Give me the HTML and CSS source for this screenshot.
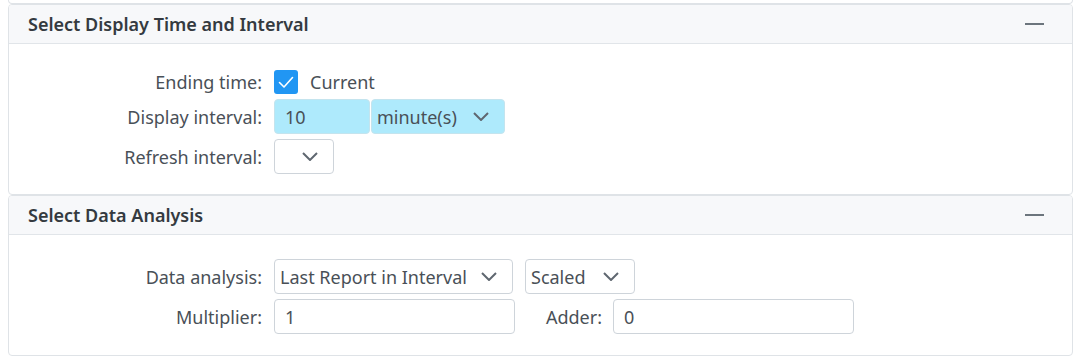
FILE: index.html
```html
<!DOCTYPE html>
<html lang="en">
<head>
    <meta charset="UTF-8">
    <title>Display settings</title>
    <link rel="stylesheet" href="styles.css">
</head>
<body>
    <div class="pagina">
        <div class="tarjeta-previa"></div>

        <div class="tarjeta">
            <div class="cabecera">
                <span class="titulo">Select Display Time and Interval</span>
                <span class="plegar"></span>
            </div>
            <div class="cuerpo cuerpo-tiempo">
                <div class="fila fila-check">
                    <label class="etiqueta">Ending time:</label>
                    <span class="check">
                        <svg width="24" height="24" viewBox="0 0 24 24">
                            <rect x="0" y="0" width="24" height="24" rx="3" fill="#2196f3"/>
                            <path d="M5.5 12.5 L10 17 L18.5 7.5" fill="none" stroke="#fff" stroke-width="1.6" stroke-linecap="round" stroke-linejoin="round"/>
                        </svg>
                    </span>
                    <span class="check-texto">Current</span>
                </div>
                <div class="fila">
                    <label class="etiqueta">Display interval:</label>
                    <div class="campo campo-activo ancho-intervalo">10</div>
                    <div class="selector campo-activo ancho-unidad">
                        <span>minute(s)</span>
                        <svg class="flecha" width="16" height="9" viewBox="0 0 16 9"><path d="M1 1 L8 8 L15 1" fill="none" stroke="#5f6770" stroke-width="2"/></svg>
                    </div>
                </div>
                <div class="fila">
                    <label class="etiqueta">Refresh interval:</label>
                    <div class="selector ancho-refresco">
                        <span></span>
                        <svg class="flecha" width="16" height="9" viewBox="0 0 16 9"><path d="M1 1 L8 8 L15 1" fill="none" stroke="#5f6770" stroke-width="2"/></svg>
                    </div>
                </div>
            </div>
        </div>

        <div class="tarjeta">
            <div class="cabecera">
                <span class="titulo">Select Data Analysis</span>
                <span class="plegar"></span>
            </div>
            <div class="cuerpo cuerpo-analisis">
                <div class="fila">
                    <label class="etiqueta">Data analysis:</label>
                    <div class="selector ancho-analisis">
                        <span>Last Report in Interval</span>
                        <svg class="flecha" width="16" height="9" viewBox="0 0 16 9"><path d="M1 1 L8 8 L15 1" fill="none" stroke="#5f6770" stroke-width="2"/></svg>
                    </div>
                    <div class="selector ancho-escala separado">
                        <span>Scaled</span>
                        <svg class="flecha" width="16" height="9" viewBox="0 0 16 9"><path d="M1 1 L8 8 L15 1" fill="none" stroke="#5f6770" stroke-width="2"/></svg>
                    </div>
                </div>
                <div class="fila">
                    <label class="etiqueta">Multiplier:</label>
                    <div class="campo ancho-numero">1</div>
                    <label class="etiqueta-sumador">Adder:</label>
                    <div class="campo ancho-numero">0</div>
                </div>
            </div>
        </div>
    </div>
</body>
</html>
```

FILE: styles.css
```css
body {
    margin: 0;
    background-color: #fff;
    font-family: "Noto Sans", "Open Sans", sans-serif;
    font-size: 18px;
    color: #495057;
}

.pagina {
    padding: 0 5px 0 8px;
}

.tarjeta-previa {
    height: 3px;
    border: 1px solid #dfe3e7;
    border-top: none;
    border-radius: 0 0 4px 4px;
}

.tarjeta {
    border: 1px solid #dfe3e7;
    border-radius: 4px;
    overflow: hidden;
}

.cabecera {
    display: flex;
    justify-content: space-between;
    align-items: center;
    height: 38px;
    padding: 0 28px 0 19px;
    background-color: #f7f8fa;
    border-bottom: 1px solid #e1e5e9;
}

.titulo {
    font-weight: 600;
    color: #343a40;
}

.plegar {
    width: 19px;
    height: 2px;
    background-color: #6c757d;
}

.cuerpo {
    display: flex;
    flex-direction: column;
    gap: 5px;
}

.cuerpo-tiempo {
    padding: 25px 0 20px;
}

.cuerpo-analisis {
    padding: 24px 0 21px;
}

.fila {
    display: flex;
    align-items: center;
}

.fila-check {
    height: 25px;
}

.etiqueta {
    width: 265px;
    padding-right: 12px;
    text-align: right;
    box-sizing: border-box;
    flex-shrink: 0;
}

.check {
    display: flex;
    width: 24px;
    height: 24px;
}

.check-texto {
    margin-left: 12px;
}

.campo, .selector {
    height: 35px;
    box-sizing: border-box;
    border: 1px solid #ced4da;
    border-radius: 4px;
    background-color: #fff;
    display: flex;
    align-items: center;
    color: #495057;
}

.campo {
    padding-left: 10px;
}

.selector {
    padding: 0 15px 0 5px;
    justify-content: space-between;
}

.campo-activo {
    background-color: #aeeafc;
    border-color: #c4e4ee;
}

.flecha {
    flex-shrink: 0;
}

.ancho-intervalo {
    width: 96px;
}

.ancho-unidad {
    width: 134px;
    margin-left: 1px;
}

.ancho-refresco {
    width: 60px;
}

.ancho-analisis {
    width: 239px;
}

.ancho-escala {
    width: 110px;
}

.separado {
    margin-left: 12px;
}

.ancho-numero {
    width: 241px;
}

.etiqueta-sumador {
    width: 98px;
    padding-right: 11px;
    text-align: right;
    box-sizing: border-box;
}
```
